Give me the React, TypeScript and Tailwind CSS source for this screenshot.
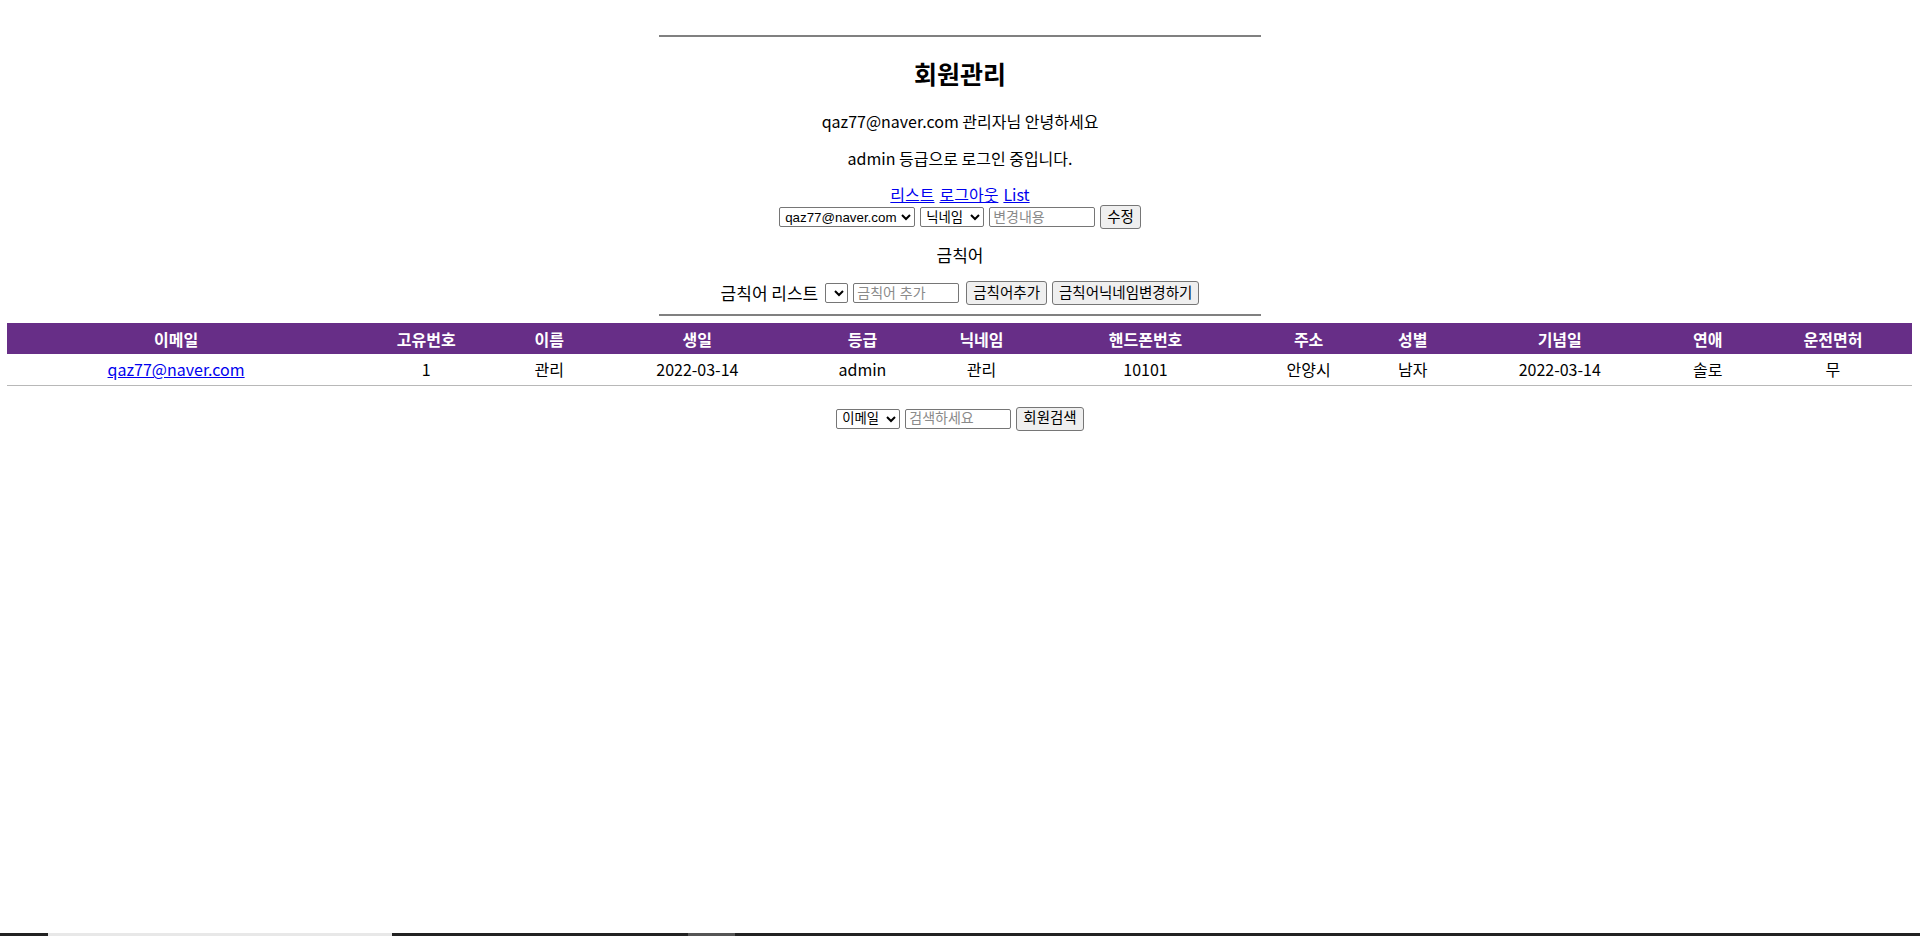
import React from 'react'

interface Member {
  email: string
  id: number
  name: string
  birth: string
  grade: string
  nickname: string
  phone: string
  address: string
  gender: string
  anniversary: string
  dating: string
  license: string
}

const members: Member[] = [
  {
    email: 'qaz77@naver.com',
    id: 1,
    name: '관리',
    birth: '2022-03-14',
    grade: 'admin',
    nickname: '관리',
    phone: '10101',
    address: '안양시',
    gender: '남자',
    anniversary: '2022-03-14',
    dating: '솔로',
    license: '무',
  },
]

const columns = [
  { label: '이메일', width: 338 },
  { label: '고유번호', width: 162 },
  { label: '이름', width: 84 },
  { label: '생일', width: 212 },
  { label: '등급', width: 118 },
  { label: '닉네임', width: 120 },
  { label: '핸드폰번호', width: 208 },
  { label: '주소', width: 118 },
  { label: '성별', width: 90 },
  { label: '기념일', width: 204 },
  { label: '연애', width: 92 },
  { label: '운전면허', width: 158 },
]

const ctrlFont = "[font-family:'Liberation_Sans','Noto_Sans_CJK_KR',sans-serif] text-[13.33px]"
const selectCls = `${ctrlFont} h-[20px] border border-[#767676] rounded-[2px] bg-white text-black px-[1px]`
const inputCls = `[font-family:'Liberation_Sans','Noto_Sans_CJK_KR',sans-serif] text-[14px] h-[20px] w-[106px] border border-[#767676] rounded-[2px] bg-white px-[3px] placeholder:text-[#8a8a8a] outline-none`
const buttonCls = "[font-family:'Liberation_Sans','Noto_Sans_CJK_KR',sans-serif] text-[14.5px] h-[24px] px-[6px] border border-[#767676] rounded-[3px] bg-[#efefef] text-black leading-none"

export default function App() {
  return (
    <div className="min-h-[936px] bg-white text-black [font-family:'Noto_Sans_CJK_KR','Noto_Sans',sans-serif]">
      <div className="pt-[35px] flex flex-col items-center text-[16px]">
        <div className="w-[602px] h-[2px] bg-[#808080]" />
        <h2 className="mt-[20px] text-[25px] leading-[32px] font-bold">회원관리</h2>
        <p className="mt-[20px] leading-[24px]">qaz77@naver.com 관리자님 안녕하세요</p>
        <p className="mt-[13px] leading-[24px]">admin 등급으로 로그인 중입니다.</p>
        <div className="mt-[13px] leading-[22px] flex gap-[5px]">
          <a href="#" className="text-[#0000ee] underline">리스트</a>
          <a href="#" className="text-[#0000ee] underline">로그아웃</a>
          <a href="#" className="text-[#0000ee] underline">List</a>
        </div>
        <form className="flex items-center gap-[5px] h-[24px]">
          <select className={`${selectCls} w-[136px]`} defaultValue="qaz77@naver.com">
            <option>qaz77@naver.com</option>
          </select>
          <select className={`${selectCls} w-[64px]`} defaultValue="닉네임">
            <option>닉네임</option>
          </select>
          <input type="text" placeholder="변경내용" className={inputCls} />
          <button type="button" className={buttonCls}>수정</button>
        </form>
        <p className="mt-[14px] leading-[24px] text-[17px]">금칙어</p>
        <div className="mt-[14px] flex items-center gap-[5px] h-[24px]">
          <span className="mr-[2px] text-[17px]">금칙어 리스트</span>
          <select className={`${selectCls} w-[23px]`} />
          <input type="text" placeholder="금칙어 추가" className={inputCls} />
          <button type="button" className={`${buttonCls} ml-[2px]`}>금칙어추가</button>
          <button type="button" className={buttonCls}>금칙어닉네임변경하기</button>
        </div>
        <div className="mt-[9px] w-[602px] h-[2px] bg-[#808080]" />
      </div>

      <div className="px-[7px] mt-[7px]">
        <table className="w-[1905px] border-collapse text-[16px] table-fixed">
          <colgroup>
            {columns.map((c) => (
              <col key={c.label} style={{ width: c.width }} />
            ))}
          </colgroup>
          <thead>
            <tr className="bg-[#672e87] text-white h-[31px]">
              {columns.map((c) => (
                <th key={c.label} className="font-bold text-center">
                  {c.label}
                </th>
              ))}
            </tr>
          </thead>
          <tbody>
            {members.map((m) => (
              <tr key={m.id} className="h-[31px] border-b border-[#b8b8b8] text-center">
                <td>
                  <a href="#" className="text-[#0000ee] underline">{m.email}</a>
                </td>
                <td>{m.id}</td>
                <td>{m.name}</td>
                <td>{m.birth}</td>
                <td>{m.grade}</td>
                <td>{m.nickname}</td>
                <td>{m.phone}</td>
                <td>{m.address}</td>
                <td>{m.gender}</td>
                <td>{m.anniversary}</td>
                <td>{m.dating}</td>
                <td>{m.license}</td>
              </tr>
            ))}
          </tbody>
        </table>
      </div>

      <form className="mt-[21px] flex justify-center items-center gap-[5px] h-[24px]">
        <select className={`${selectCls} w-[64px]`} defaultValue="이메일">
          <option>이메일</option>
        </select>
        <input type="text" placeholder="검색하세요" className={inputCls} />
        <button type="button" className={buttonCls}>회원검색</button>
      </form>

      {/* bottom strip seen at the window edge */}
      <div className="fixed bottom-0 left-0 right-0 h-[3px] bg-[#222222] flex">
        <div className="ml-[48px] w-[344px] h-full bg-[#e8e8e8]" />
        <div className="ml-[296px] w-[47px] h-full bg-[#555555]" />
      </div>
    </div>
  )
}
